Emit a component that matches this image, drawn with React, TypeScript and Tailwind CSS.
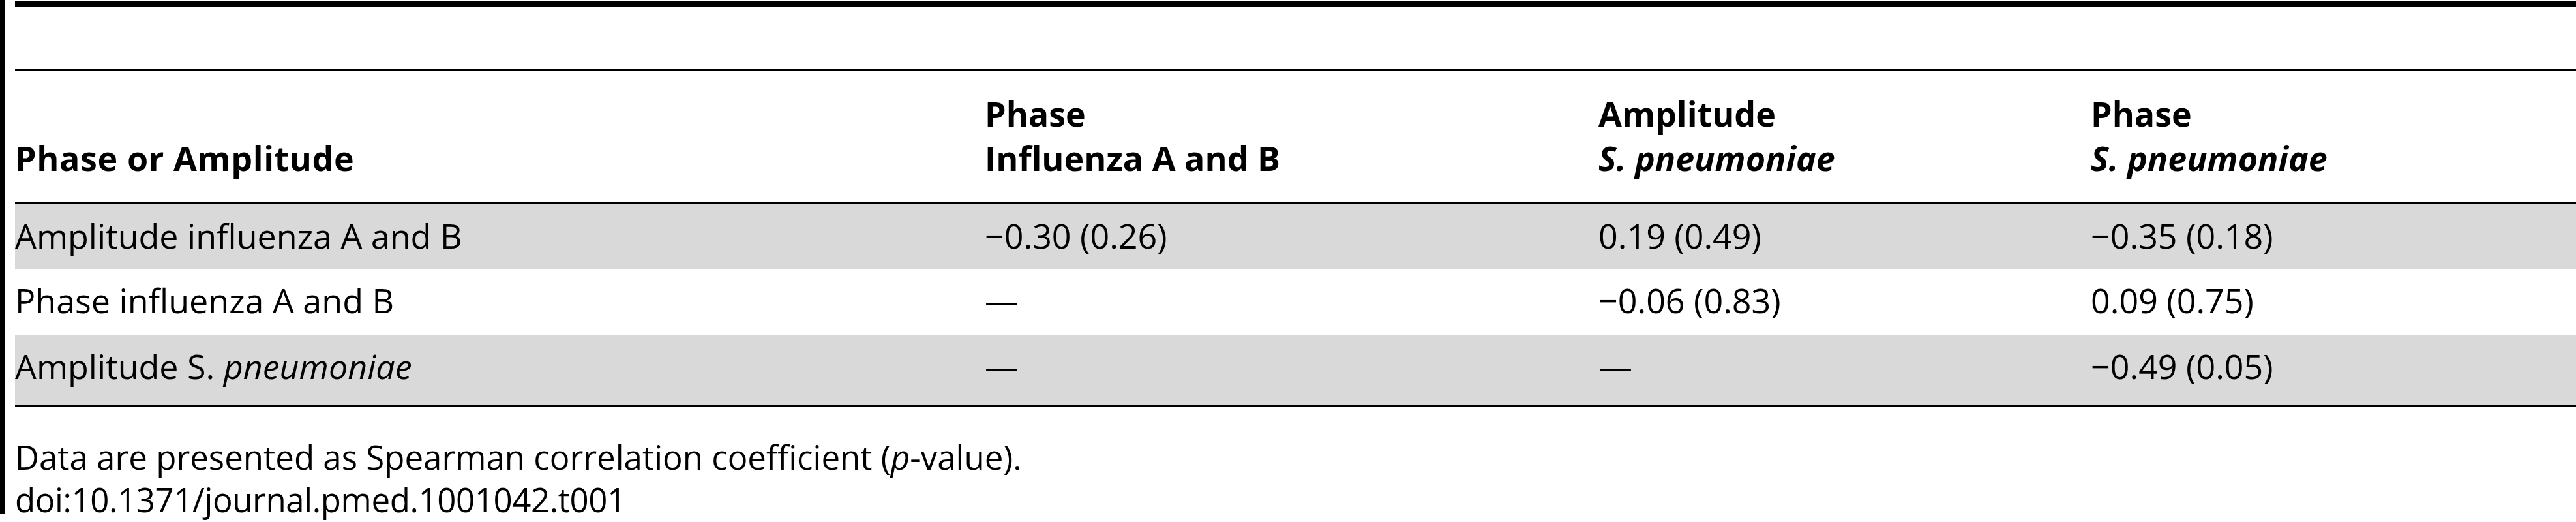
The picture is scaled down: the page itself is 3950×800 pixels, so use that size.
import React from "react";

const font = "font-['Open_Sans','Noto_Sans',sans-serif]";

type Row = { label: React.ReactNode; cells: string[]; gray: boolean; h: string };

const rows: Row[] = [
  {
    label: "Amplitude influenza A and B",
    cells: ["\u22120.30 (0.26)", "0.19 (0.49)", "\u22120.35 (0.18)"],
    gray: true,
    h: "h-[99px]",
  },
  {
    label: "Phase influenza A and B",
    cells: ["\u2014", "\u22120.06 (0.83)", "0.09 (0.75)"],
    gray: false,
    h: "h-[101px]",
  },
  {
    label: (
      <>
        Amplitude S. <i>pneumoniae</i>
      </>
    ),
    cells: ["\u2014", "\u2014", "\u22120.49 (0.05)"],
    gray: true,
    h: "h-[107px]",
  },
];

export default function App() {
  return (
    <div className={`flex w-[3950px] h-[800px] bg-white text-black ${font} text-[52px] leading-[68px] overflow-hidden`}>
      <div className="w-[8px] h-[787px] bg-black shrink-0" />
      <div className="ml-[15px] flex-1 flex flex-col">
        <div className="mt-[1px] h-[9px] bg-black" />
        <div className="h-[95px]" />
        <div className="h-[4px] bg-black" />
        <div className="grid grid-cols-[1487px_941px_755px_1fr] h-[200px] items-end pb-[33px] font-bold">
          <div className="tracking-[0.6px]">Phase or Amplitude</div>
          <div className="flex flex-col">
            <span>Phase</span>
            <span>Influenza A and B</span>
          </div>
          <div className="flex flex-col">
            <span>Amplitude</span>
            <span className="italic">S. pneumoniae</span>
          </div>
          <div className="flex flex-col">
            <span>Phase</span>
            <span className="italic">S. pneumoniae</span>
          </div>
        </div>
        <div className="h-[4px] bg-black" />
        {rows.map((r, i) => (
          <div
            key={i}
            className={`grid grid-cols-[1487px_941px_755px_1fr] ${r.h} pt-[14px] ${r.gray ? "bg-[#d9d9d9]" : "bg-white"}`}
          >
            <div>{r.label}</div>
            {r.cells.map((c, j) => (
              <div key={j}>{c}</div>
            ))}
          </div>
        ))}
        <div className="h-[4px] bg-black" />
        <div className="mt-[44px] text-[51px] leading-[65px]">
          <div>
            Data are presented as Spearman correlation coefficient (<i>p</i>-value).
          </div>
          <div className="tracking-[-0.4px]">doi:10.1371/journal.pmed.1001042.t001</div>
        </div>
      </div>
    </div>
  );
}
